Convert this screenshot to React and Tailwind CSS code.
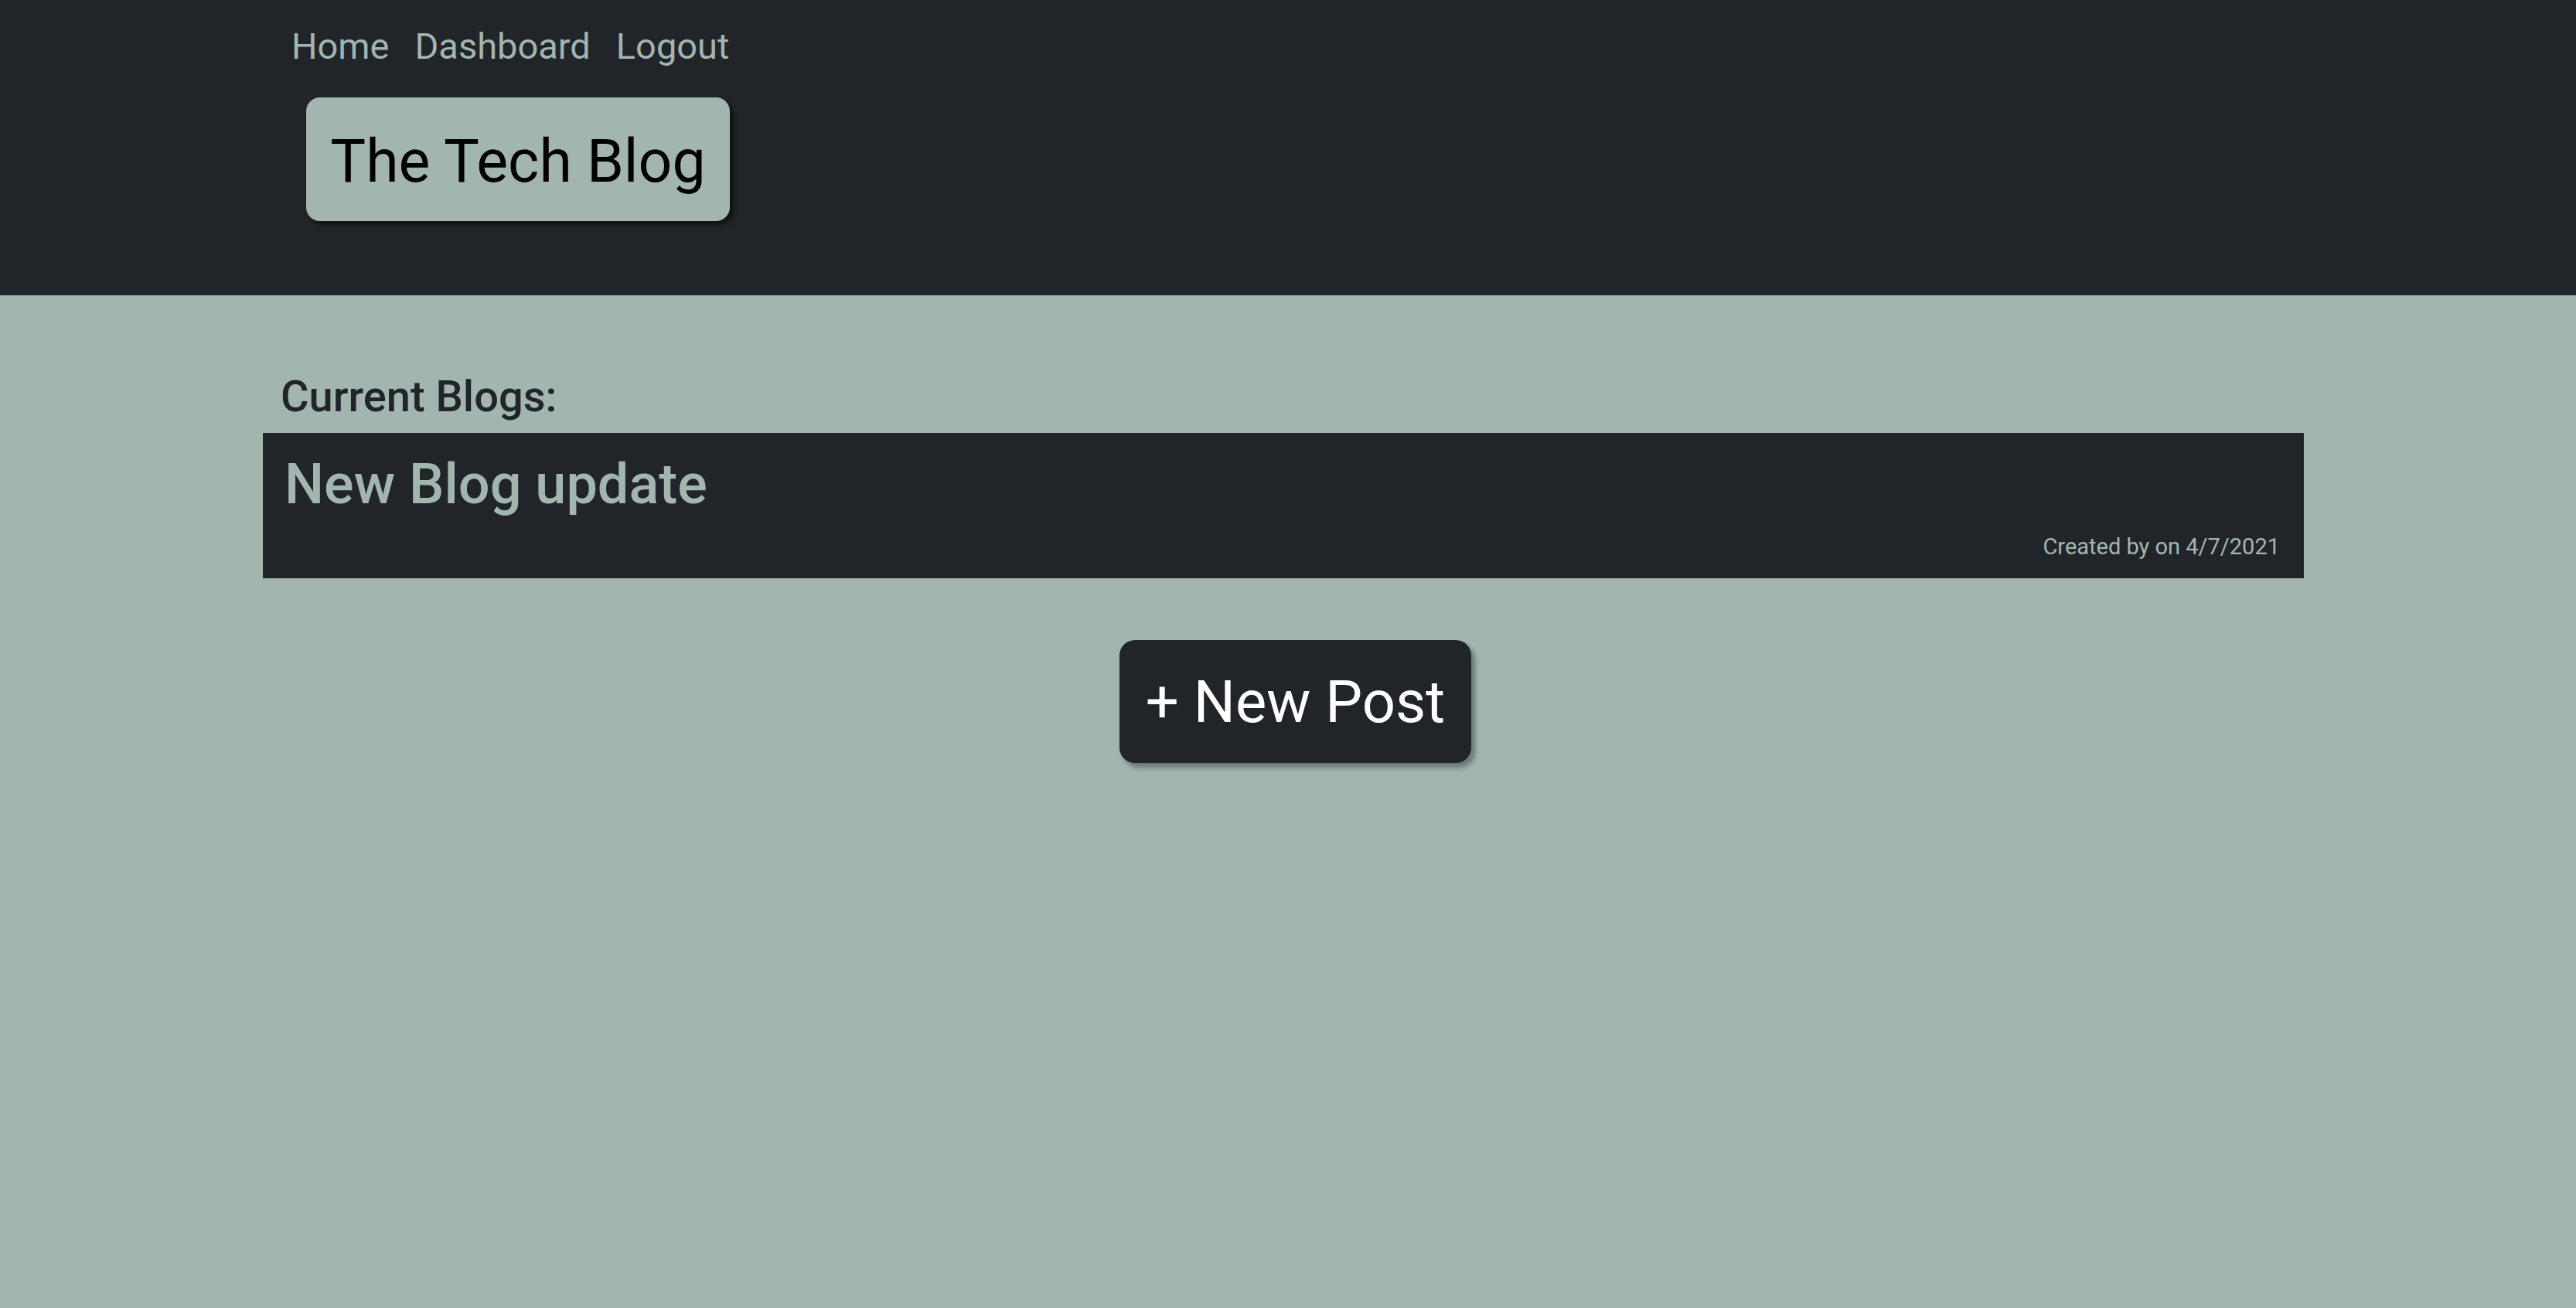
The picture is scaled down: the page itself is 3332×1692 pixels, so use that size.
export default function App() {
    return (
        <div className="min-h-screen bg-[#a3b5af] font-['Roboto','Liberation_Sans',Arial,sans-serif]">
            <header className="h-[382px] bg-[#212529] pl-[377px] pt-[36px]">
                <nav className="flex gap-[33px] text-[47px] leading-[47px] text-[#a3b5af]">
                    <a href="#">Home</a>
                    <a href="#">Dashboard</a>
                    <a href="#">Logout</a>
                </nav>
                <div className="mt-[43px] ml-[19px] w-[548px] h-[160px] rounded-[18px] bg-[#a3b5af] shadow-[5px_5px_5px_rgba(0,0,0,0.5)] flex items-center justify-center pt-[7px]">
                    <h1 className="text-[77px] leading-[77px] text-black">The Tech Blog</h1>
                </div>
            </header>

            <main className="pl-[340px] pr-[352px] pt-[103px]">
                <h2 className="pl-[23px] text-[56px] leading-[56px] font-medium text-[#212529]">Current Blogs:</h2>
                <div className="mt-[19px] bg-[#212529] h-[188px] pl-[28px] pr-[31px] pt-[31px] pb-[26px] flex flex-col">
                    <h3 className="text-[72px] leading-[72px] font-medium text-[#a3b5af]">New Blog update</h3>
                    <p className="mt-auto self-end text-[29px] leading-[29px] text-[#a3b5af]">Created by on 4/7/2021</p>
                </div>
                <div className="flex justify-center pl-[31px] mt-[80px]">
                    <button className="w-[455px] h-[159px] rounded-[20px] bg-[#212529] text-white text-[76px] leading-[76px] shadow-[5px_6px_6px_rgba(0,0,0,0.35)]">+ New Post</button>
                </div>
            </main>
        </div>
    );
}
